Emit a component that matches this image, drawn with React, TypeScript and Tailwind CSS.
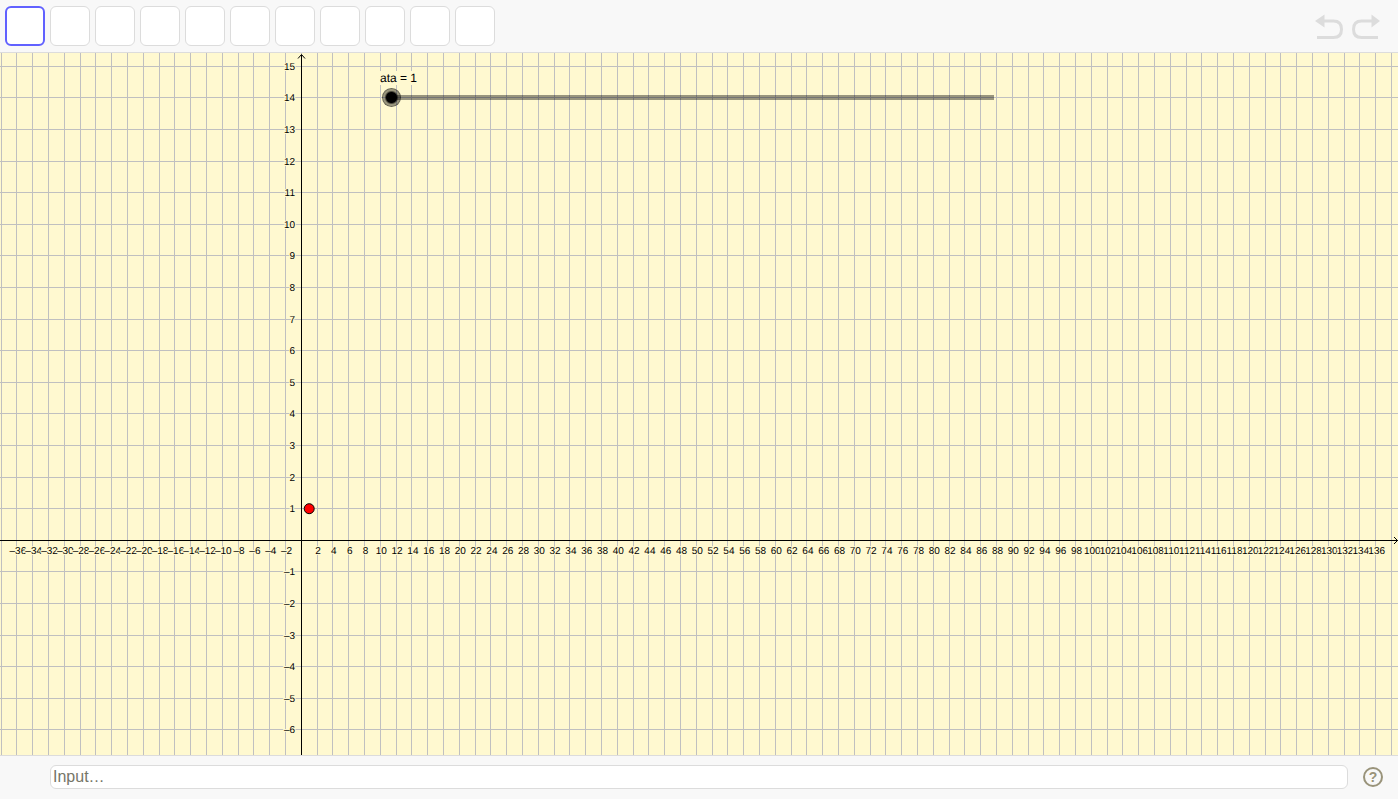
import React, { useState } from "react";

const UNIT_X = 7.9;
const UNIT_Y = 31.6;
const ORIGIN_X = 301.3;
const ORIGIN_Y = 487.3;

const tools = [
  "Move",
  "Point",
  "Line",
  "Perpendicular Line",
  "Polygon",
  "Circle",
  "Ellipse",
  "Angle",
  "Reflect",
  "Slider",
  "Move Graphics View",
];

function range(from: number, to: number) {
  return Array.from({ length: to - from + 1 }, (_, i) => from + i);
}

// keep the 1px lines on the pixel grid
const snap = (n: number) => Math.floor(n) + 0.5;

const label = (n: number) => (n < 0 ? `–${-n}` : `${n}`);

const columns = range(-19, 200).map((i) => i * 2);
const rows = range(-40, 15);

const axisX = snap(ORIGIN_X);
const axisY = snap(ORIGIN_Y);

function Toolbar() {
  const [active, setActive] = useState(0);

  return (
    <header className="flex h-[53px] shrink-0 items-center justify-between border-b border-[#dcdcdc] bg-[#f8f8f8] pl-[5px] pr-[18px]">
      <div className="flex gap-[5px]">
        {tools.map((tool, i) => (
          <button
            key={tool}
            aria-label={tool}
            onClick={() => setActive(i)}
            className={
              i === active
                ? "size-10 rounded-md border-2 border-[#6161ff] bg-white"
                : "size-10 rounded-md border border-[#dcdcdc] bg-white"
            }
          />
        ))}
      </div>
      <div className="flex gap-2">
        <button aria-label="Undo">
          <svg width="29" height="26" viewBox="0 0 29 26">
            <path d="M0 8 9.500 1.500v13z" fill="#dcdcdc" />
            <path
              d="M8 8h10.500c5 0 8 3 8 8.250s-3 8.250-8 8.250H2"
              fill="none"
              stroke="#dcdcdc"
              strokeWidth="3"
            />
          </svg>
        </button>
        <button aria-label="Redo">
          <svg width="28" height="26" viewBox="0 0 28 26">
            <path d="M28 8 19.500 1.500v13z" fill="#dcdcdc" />
            <path
              d="M20 8H9.500c-5 0-8 3-8 8.250s3 8.250 8 8.250H26"
              fill="none"
              stroke="#dcdcdc"
              strokeWidth="3"
            />
          </svg>
        </button>
      </div>
    </header>
  );
}

function Grid() {
  return (
    <svg
      className="absolute inset-0 h-full w-full text-[10px]"
      fontFamily="'Liberation Sans', Arial, sans-serif"
      textRendering="geometricPrecision"
    >
      <g stroke="#c0c0c0">
        {columns.map((n) => {
          const x = snap(ORIGIN_X + n * UNIT_X);
          return <line key={n} x1={x} x2={x} y1="0" y2="100%" />;
        })}
        {rows.map((n) => {
          const y = snap(ORIGIN_Y - n * UNIT_Y);
          return <line key={n} x1="0" x2="100%" y1={y} y2={y} />;
        })}
      </g>

      {/* axes */}
      <g stroke="#000" fill="none">
        <line x1={axisX} x2={axisX} y1="2" y2="100%" />
        <path d="M298 5.500l3.500-4 3.500 4" />
        <line x1="0" x2="100%" y1={axisY} y2={axisY} />
        <svg x="100%" y={axisY} overflow="visible">
          <path d="M-4-3.500l3.500 3.500-3.500 3.500" />
        </svg>
      </g>

      {/* numbers, each with a halo that hides the grid behind it */}
      <g stroke="#fff9d0" strokeWidth="2" paintOrder="stroke">
        {columns
          .filter((n) => n !== 0 && n > -38 && n < 138)
          .map((n) => (
            <text
              key={n}
              x={ORIGIN_X + n * UNIT_X + 1}
              y={axisY + 13}
              textAnchor="middle"
            >
              {label(n)}
            </text>
          ))}
        {rows
          .filter((n) => n !== 0 && n > -7)
          .map((n) => (
            <text
              key={n}
              x="295"
              y={Math.floor(ORIGIN_Y - n * UNIT_Y) + 4}
              textAnchor="end"
            >
              {label(n)}
            </text>
          ))}
      </g>

      <circle
        cx={ORIGIN_X + UNIT_X}
        cy={ORIGIN_Y - UNIT_Y}
        r="5"
        fill="#f00"
        stroke="#000"
      />
    </svg>
  );
}

function GraphicsView() {
  const [ata, setAta] = useState(1);

  return (
    <main className="relative min-h-0 flex-1 overflow-hidden bg-[#fff9d0]">
      <Grid />
      <div className="absolute left-[380px] top-[18px] flex flex-col items-start">
        <label
          htmlFor="ata"
          className="bg-[#fff9d0] text-[12px] leading-[14px] text-black [text-rendering:geometricPrecision]"
        >
          ata = {ata}
        </label>
        <input
          id="ata"
          type="range"
          min={1}
          max={100}
          value={ata}
          onChange={(e) => setAta(Number(e.target.value))}
          className="ml-[2px] mt-[3px] h-[19px] w-[612px] appearance-none bg-[linear-gradient(#00000066,#00000066)] bg-[length:602px_5px] bg-[position:right_center] bg-no-repeat [&::-webkit-slider-thumb]:size-[19px] [&::-webkit-slider-thumb]:appearance-none [&::-webkit-slider-thumb]:rounded-full [&::-webkit-slider-thumb]:bg-[radial-gradient(circle,#000_5px,#00000066_7px,#00000066_8px,#00000099_9px)]"
        />
      </div>
    </main>
  );
}

function InputBar() {
  return (
    <footer className="flex h-11 shrink-0 items-center gap-[15px] border-t border-[#dcdcdc] bg-[#f8f8f8] pb-0.5 pl-[50px] pr-[15px]">
      <input
        type="text"
        aria-label="Input"
        placeholder="Input…"
        className="h-6 min-w-0 flex-1 rounded-md border border-[#dcdcdc] bg-white px-0.5 text-[16px] placeholder:text-[#757568] focus:outline-none"
      />
      <button
        aria-label="Input Help"
        className="flex size-5 items-center justify-center rounded-full border-2 border-[#99937a] text-[14px] leading-none font-bold text-[#99937a]"
      >
        ?
      </button>
    </footer>
  );
}

export default function App() {
  return (
    <div className="flex h-screen flex-col bg-white pr-0.5 pb-px font-['Liberation_Sans',Arial,sans-serif]">
      <Toolbar />
      <GraphicsView />
      <InputBar />
    </div>
  );
}
